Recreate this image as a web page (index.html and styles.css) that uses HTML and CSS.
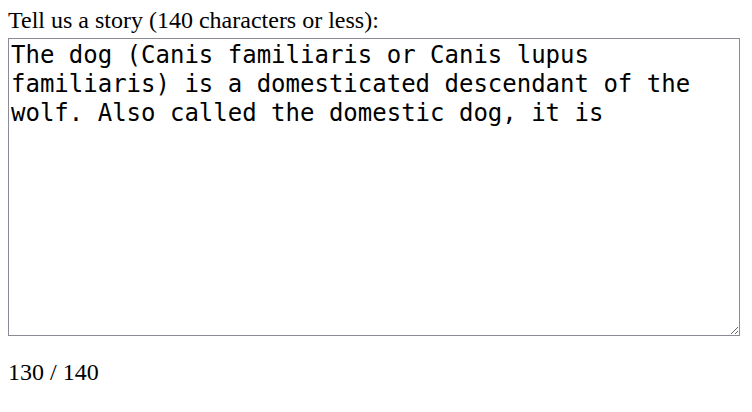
FILE: index.html
```html
<!DOCTYPE html>
<html>
<head>
<meta charset="utf-8">
<link rel="stylesheet" href="styles.css">
</head>
<body>
<form class="story">
  <label class="story-label" for="story">Tell us a story (140 characters or less):</label>
  <textarea id="story" class="story-input" maxlength="140">The dog (Canis familiaris or Canis lupus familiaris) is a domesticated descendant of the wolf. Also called the domestic dog, it is</textarea>
  <p class="counter">130 / 140</p>
</form>
</body>
</html>
```
FILE: styles.css
```css
body {
  margin: 8px;
  font-family: "Liberation Serif", serif;
  font-size: 24px;
  color: #000;
  background: #fff;
}
.story {
  display: flex;
  flex-direction: column;
}
.story-label {
  display: block;
  line-height: 24px;
  margin-bottom: 6px;
}
.story-input {
  box-sizing: border-box;
  width: 732px;
  height: 298px;
  margin: 0;
  padding: 2px;
  border: 1px solid #8b8a97;
  border-radius: 0;
  font-family: "DejaVu Sans Mono", monospace;
  font-size: 24px;
  line-height: 29px;
  color: #000;
  resize: both;
}
.counter {
  margin: 24px 0 0;
  line-height: 24px;
}
```
